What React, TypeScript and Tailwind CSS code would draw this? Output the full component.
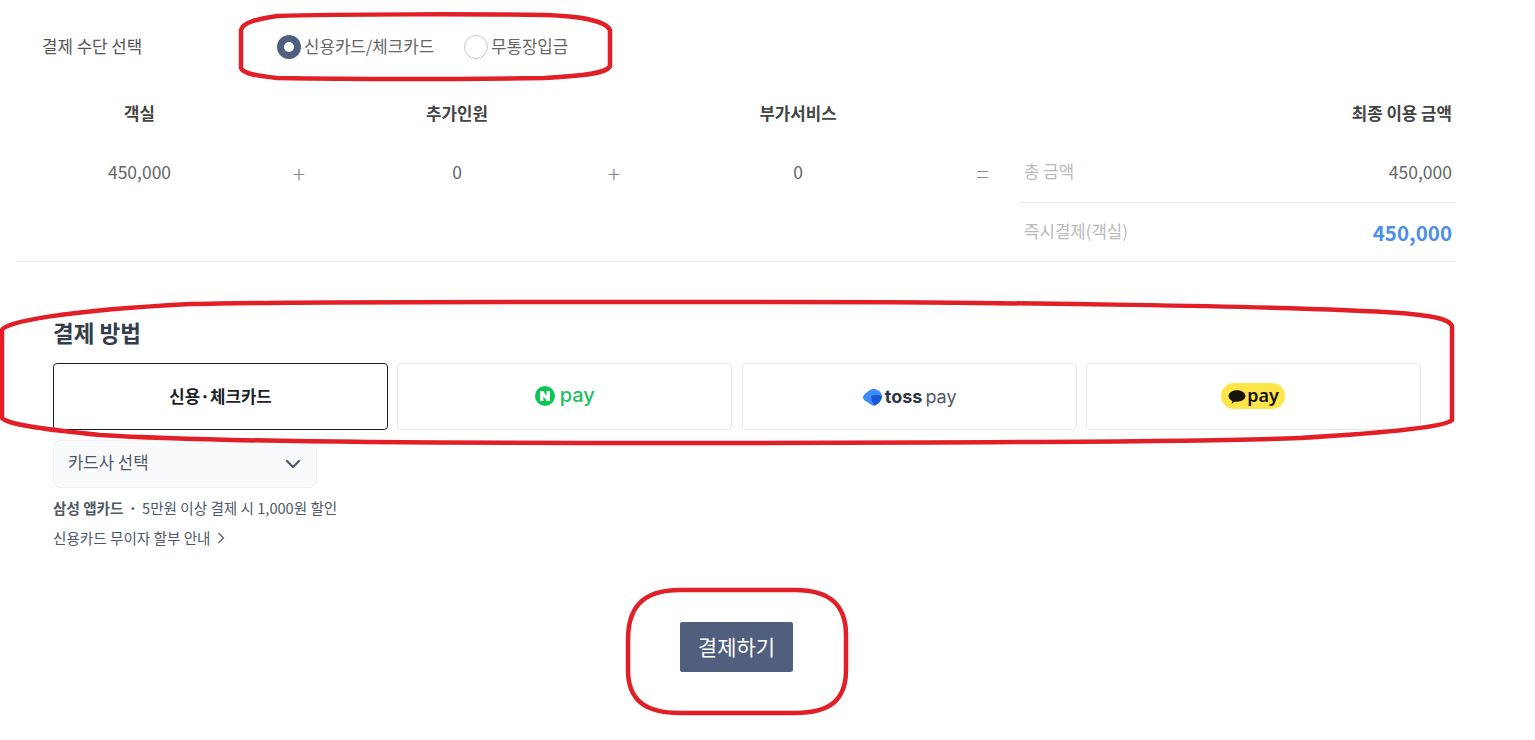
export default function App() {
  const font = { fontFamily: '"Noto Sans CJK KR", "Noto Sans", sans-serif' };
  return (
    <div style={font} className="relative h-[740px] w-[1535px] overflow-hidden bg-white text-[#444]">
      <div className="flex h-[92px] items-center pt-[1px] pl-[42px]">
        <span className="w-[235px] text-[16.8px] text-[#555]">결제 수단 선택</span>
        <span className="flex h-[24px] w-[24px] items-center justify-center rounded-full bg-[#505f7d]">
          <span className="h-[10px] w-[10px] rounded-full bg-white" />
        </span>
        <span className="w-[163px] pl-[3px] text-[16.8px] text-[#666]">신용카드/체크카드</span>
        <span className="h-[24px] w-[24px] rounded-full border border-[#c8c8c8]" />
        <span className="pl-[3px] text-[16.8px] text-[#666]">무통장입금</span>
      </div>

      <div className="ml-[16px] w-[1440px]">
        <div className="grid grid-cols-[247px_72px_244px_70px_298px_73px_436px] items-center text-center">
          <div className="flex h-[43px] items-center justify-center text-[16.8px] font-bold text-[#444]">객실</div>
          <div />
          <div className="flex h-[43px] items-center justify-center text-[16.8px] font-bold text-[#444]">추가인원</div>
          <div />
          <div className="flex h-[43px] items-center justify-center text-[16.8px] font-bold text-[#444]">부가서비스</div>
          <div />
          <div className="flex h-[43px] items-center justify-end pr-[4px] text-[16.8px] font-bold text-[#444]">최종 이용 금액</div>
        </div>
        <div className="grid grid-cols-[247px_72px_244px_70px_298px_73px_436px] items-start border-b border-[#e6e6e6] text-center">
          <div className="flex h-[68px] items-center justify-center pt-[7px] text-[17.5px] text-[#666]">450,000</div>
          <div className="flex h-[68px] items-center justify-center pt-[9px] text-[23px] font-light text-[#888]">+</div>
          <div className="flex h-[68px] items-center justify-center pt-[7px] text-[17.5px] text-[#666]">0</div>
          <div className="flex h-[68px] items-center justify-center pt-[9px] text-[23px] font-light text-[#888]">+</div>
          <div className="flex h-[68px] items-center justify-center pt-[7px] text-[17.5px] text-[#666]">0</div>
          <div className="flex h-[68px] items-center justify-center pt-[9px] pr-[2px] text-[23px] font-light text-[#888]">=</div>
          <div>
            <div className="flex h-[68px] items-center justify-between border-b border-[#e6e6e6] px-[4px] pt-[7px]">
              <span className="text-[16.8px] text-[#b9b9b9]">총 금액</span>
              <span className="text-[17.5px] text-[#666]">450,000</span>
            </div>
            <div className="flex h-[58px] items-center justify-between px-[4px]">
              <span className="text-[16.8px] text-[#b9b9b9]">즉시결제(객실)</span>
              <span className="text-[20.5px] font-semibold text-[#4c8fe8]">450,000</span>
            </div>
          </div>
        </div>
      </div>

      <div className="ml-[53px] w-[1368px] pt-[54px]">
        <h2 className="h-[47px] text-[22.5px] leading-[32px] font-semibold text-[#333d4b]">결제 방법</h2>
        <div className="grid grid-cols-4 gap-[9.33px]">
          <div className="flex h-[67px] items-center justify-center rounded-[4px] border border-[#191f28] text-[16.8px] font-bold text-[#191f28]">
            신용·체크카드
          </div>
          <div className="flex h-[67px] items-center justify-center rounded-[4px] border border-[#e5e8eb]">
            <svg width="20" height="20" viewBox="0 0 20 20" className="mr-[5px] mb-[1px]">
              <circle cx="10" cy="10" r="10" fill="#08c755" />
              <path d="M5 15V5H8.2L11.6 9.8V5H15V15H11.8L8.4 10.2V15Z" fill="#fff" />
            </svg>
            <span className="mb-[3px] text-[20px] leading-none font-medium text-[#20bf5f]" style={{ fontFamily: '"Inter", sans-serif' }}>pay</span>
          </div>
          <div className="flex h-[67px] items-center justify-center rounded-[4px] border border-[#e5e8eb] pt-[1px]">
            <svg width="21" height="18" viewBox="0 0 21 18" className="mr-[2px]">
              <path d="M1 9.5C1 7 3.5 5 6 3.5C8.5 1.5 11 .5 13 1C16.5 2 20 4.5 20 8C20 12.5 15.5 17 12 17.5C9 17.5 7.5 15.5 5.5 14C3 13 1 12 1 9.5Z" fill="#3b8cf5" />
              <path d="M9 8C12 6.5 16.5 6.5 20 8C20 12.5 15.5 17 12 17.5C10.5 15 9.5 11 9 8Z" fill="#1b56d8" />
            </svg>
            <span className="text-[18px] leading-none font-bold text-[#2b3440]" style={{ fontFamily: '"Inter", sans-serif' }}>toss</span>
            <span className="ml-[3px] text-[18px] leading-none font-normal text-[#4e5968]" style={{ fontFamily: '"Inter", sans-serif' }}>pay</span>
          </div>
          <div className="flex h-[67px] items-center justify-center rounded-[4px] border border-[#e5e8eb]">
            <div className="mb-[1px] flex h-[26px] w-[64px] items-center justify-center rounded-full bg-[#fee54a]">
              <svg width="18" height="16" viewBox="0 0 16 14" className="mr-[1px] mt-[1px]">
                <path d="M8 1C3.8 1 .5 3.3.5 6.2c0 1.9 1.4 3.5 3.4 4.4L3.2 13l2.9-1.9c.6.1 1.3.2 1.9.2 4.2 0 7.5-2.3 7.5-5.1S12.2 1 8 1Z" fill="#16130b" />
              </svg>
              <span className="mb-[3px] text-[18px] leading-none font-semibold text-[#16130b]" style={{ fontFamily: '"Noto Sans", sans-serif' }}>pay</span>
            </div>
          </div>
        </div>

        <div className="mt-[10px] flex h-[48px] w-[264px] items-center justify-between rounded-[8px] border border-[#eef0f2] bg-[#f9fafb] pr-[15px] pl-[14px]">
          <span className="pb-[2px] text-[16.7px] text-[#4e5968]">카드사 선택</span>
          <svg width="16" height="10" viewBox="0 0 16 10" fill="none">
            <path d="M2 2l6 6 6-6" stroke="#4e5968" strokeWidth="2.2" strokeLinecap="round" strokeLinejoin="round" />
          </svg>
        </div>
        <div className="mt-[10px] flex h-[20px] items-center text-[14.6px] text-[#4e5968]">
          <span className="font-semibold">삼성 앱카드</span>
          <span className="mx-[5px] font-bold">·</span>
          <span>5만원 이상 결제 시 1,000원 할인</span>
        </div>
        <div className="mt-[10px] flex h-[20px] items-center text-[14.6px] text-[#4e5968]">
          <span>신용카드 무이자 할부 안내</span>
          <svg width="8" height="12" viewBox="0 0 8 12" fill="none" className="ml-[6px]">
            <path d="M1.5 1l5 5-5 5" stroke="#4e5968" strokeWidth="1.2" />
          </svg>
        </div>
      </div>

      <div className="flex justify-center pt-[74px] pr-[62px]">
        <button className="h-[50px] w-[113px] rounded-[2px] bg-[#505f7d] text-[21px] text-white">결제하기</button>
      </div>

      <svg className="pointer-events-none absolute top-0 left-0" width="1535" height="740" fill="none" stroke="#e21f26" strokeWidth="4.5" strokeLinejoin="round">
        <path d="M241 30C243 22 258 19 277 16C340 14 480 14 545 15C580 16 606 21 610 30V66C607 73 585 76 545 78C470 79 340 79 277 78C258 76 243 74 241 68Z" />
        <path d="M2 330C5 322 60 311 190 304C300 301 540 302 750 302C1000 302 1300 306 1400 313C1435 316 1449 319 1452 326L1452 420C1447 426 1400 432 1300 438C1180 443 800 443 600 443C400 443 213 442 100 435C50 430 8 425 2 418Z" />
        <path d="M628 640C628 610 640 590 680 590H795C830 590 846 605 846 635V670C846 700 830 713 795 713H680C645 713 628 700 628 670Z" />
      </svg>
    </div>
  );
}
